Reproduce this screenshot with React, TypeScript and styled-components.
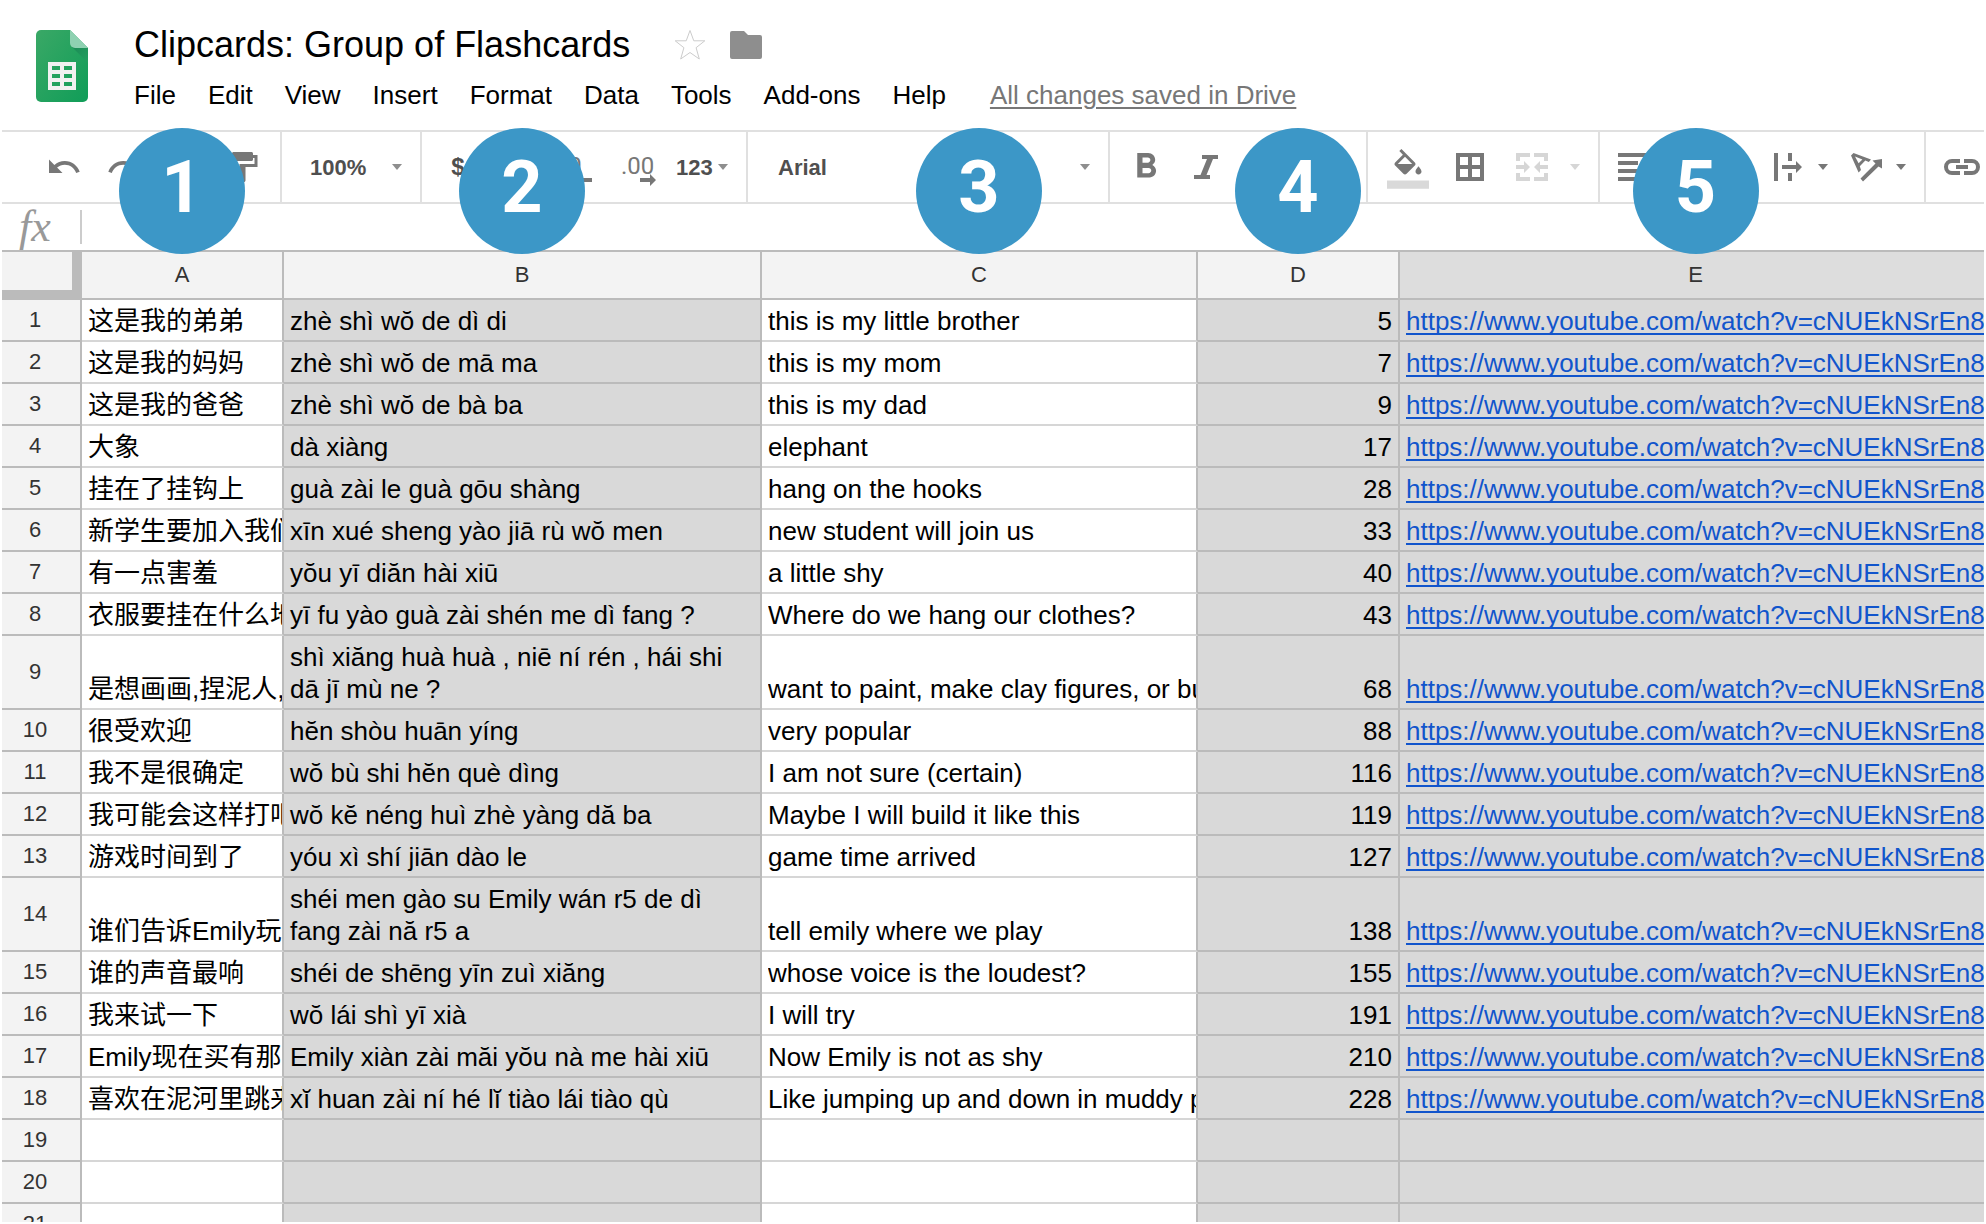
import React from "react";
import styled, { createGlobalStyle } from "styled-components";

const sans = `"Liberation Sans", Arial, "Noto Sans CJK SC", sans-serif`;
const ink = "#777777";
const line = "#e0e0e0";
const gridLine = "#bbbbbb";

const GlobalStyle = createGlobalStyle`
  * { box-sizing: border-box; }
  body { margin: 0; background: #fff; font-family: ${sans}; color: #000; }
  button { font: inherit; color: inherit; background: none; border: 0; padding: 0; cursor: pointer; }
  svg { display: block; flex: none; overflow: visible; }
`;

const Page = styled.div`
  height: 100vh;
  padding: 0 2px 2px;
`;

const Clip = styled.div`
  height: 100%;
  overflow: hidden;
`;

const Header = styled.header`
  display: flex;
  gap: 46px;
  padding: 23px 34px 19px;
`;

const Logo = styled.a`
  padding-top: 7px;
`;

const TitleRow = styled.div`
  display: flex;
  align-items: center;
  gap: 24px;
  margin-bottom: 12px;
`;

const Title = styled.h1`
  margin: 0 20px 0 0;
  font-size: 36px;
  line-height: 44px;
  font-weight: 400;
`;

const FolderButton = styled.button`
  color: #8e8e8e;
`;

const Menu = styled.nav`
  display: flex;
  align-items: center;
  gap: 32px;
  font-size: 26px;
  line-height: 32px;
`;

const SavedLink = styled.a`
  margin-left: 12px;
  color: ${ink};
  text-decoration: underline;
  text-decoration-thickness: 2px;
  text-underline-offset: 3px;
`;

const Toolbar = styled.div`
  display: flex;
  height: 74px;
  border: solid ${line};
  border-width: 2px 0;
  font-size: 22px;
  font-weight: 700;
  color: #4f4f4f;
`;

const Group = styled.div<{ $pad: string; $gap?: number }>`
  display: flex;
  flex: none;
  align-items: center;
  gap: ${(p) => p.$gap ?? 0}px;
  padding: ${(p) => p.$pad};
  border-right: 2px solid ${line};

  &:last-child {
    border-right: 0;
  }
`;

const Tool = styled.button<{ $disabled?: boolean }>`
  display: flex;
  flex: none;
  align-items: center;
  justify-content: center;
  width: 60px;
  height: 68px;
  color: ${(p) => (p.$disabled ? "#d6d6d6" : ink)};
`;

const SlimTool = styled(Tool)`
  width: 22px;
`;

const CurrencyTool = styled(Tool)`
  font-size: 24px;
  color: #4f4f4f;
`;

const DropTool = styled(Tool)`
  width: 78px;
  justify-content: flex-start;
  gap: 8px;
`;

const DropIcon = styled.span`
  display: flex;
  justify-content: center;
  width: 44px;
`;

const Picker = styled.label<{ $width: number }>`
  display: flex;
  align-items: center;
  justify-content: space-between;
  width: ${(p) => p.$width}px;
  color: #8e8e8e;
`;

const PickerSelect = styled.select`
  appearance: none;
  flex: 1;
  min-width: 0;
  padding: 0;
  border: 0;
  background: none;
  color: #4f4f4f;
  font: inherit;
`;

const FormulaBar = styled.div`
  display: flex;
  align-items: center;
  height: 46px;
`;

const FormulaLabel = styled.label`
  width: 80px;
  padding-left: 17px;
  border-right: 2px solid #cccccc;
  font: italic 44px/34px "Liberation Serif", "Times New Roman", serif;
  color: #999999;
`;

const FormulaInput = styled.input`
  flex: 1;
  height: 34px;
  border: 0;
  outline: 0;
  font: 26px/32px ${sans};
`;

const Sheet = styled.table`
  width: calc(100% + 9px);
  table-layout: fixed;
  border-collapse: separate;
  border-spacing: 0;
  border-top: 2px solid ${gridLine};
  font-size: 26px;
  line-height: 32px;
`;

const Col = styled.col<{ $width?: number }>`
  width: ${(p) => (p.$width ? `${p.$width}px` : "auto")};
`;

const Corner = styled.td`
  height: 48px;
  background: #f3f3f3;
  border: solid ${gridLine};
  border-width: 0 10px 10px 0;
`;

const ColumnHead = styled.th<{ $active?: boolean }>`
  position: relative;
  height: 48px;
  padding: 0;
  background: ${(p) => (p.$active ? "#dddddd" : "#f3f3f3")};
  border: solid ${gridLine};
  border-width: 0 2px 2px 0;
  font-size: 22px;
  font-weight: 400;
  color: #333333;
`;

const Badge = styled.span`
  position: absolute;
  left: calc(50% - 63px);
  bottom: 44px;
  width: 126px;
  height: 126px;
  border-radius: 50%;
  background: #3c97c7;
  color: #fff;
  font-family: Roboto, ${sans};
  font-size: 72px;
  font-weight: 700;
  line-height: 120px;
  text-align: center;
`;

const RowHead = styled.th`
  padding: 0 12px 0 0;
  background: #f3f3f3;
  border: solid ${gridLine};
  border-width: 0 2px 2px 0;
  font-size: 22px;
  font-weight: 400;
  color: #333333;
`;

const Cell = styled.td<{ $shaded?: boolean; $wrap?: boolean; $right?: boolean }>`
  height: 42px;
  padding: 5px 6px 3px;
  overflow: hidden;
  vertical-align: bottom;
  white-space: ${(p) => (p.$wrap ? "normal" : "nowrap")};
  text-align: ${(p) => (p.$right ? "right" : "left")};
  background: ${(p) => (p.$shaded ? "#d9d9d9" : "#ffffff")};
  border: solid ${gridLine};
  border-width: 0 2px 2px 0;
  border-bottom-color: ${(p) => (p.$shaded ? gridLine : "#d6d6d6")};
`;

/* Text that runs on past its cell's padding, up to the border. */
const Spill = styled.div`
  margin-right: -6px;
  overflow: hidden;
`;

const CellLink = styled.a`
  color: #1155cc;
  text-decoration: underline;
  text-decoration-thickness: 2px;
  text-decoration-skip-ink: none;
  text-underline-offset: 3px;
`;

const Arrow = () => (
  <svg width="10" height="6" viewBox="0 0 10 6" fill="currentColor">
    <path d="M0 0h10L5 6z" />
  </svg>
);

type GlyphProps = { d: string; w?: number; h?: number; box?: string };

const Glyph = ({ d, w = 36, h = 36, box = "0 0 24 24" }: GlyphProps) => (
  <svg width={w} height={h} viewBox={box} fill="currentColor" fillRule="evenodd">
    <path d={d} />
  </svg>
);

const paths = {
  undo: "M12.5 8c-2.65 0-5.05.99-6.9 2.6L2 7v9h9l-3.62-3.62c1.39-1.16 3.16-1.88 5.12-1.88 3.54 0 6.55 2.31 7.6 5.5l2.37-.78C21.08 11.03 17.15 8 12.5 8z",
  redo: "M18.4 10.6C16.55 8.99 14.15 8 11.5 8c-4.65 0-8.58 3.03-9.96 7.22L3.9 16c1.05-3.19 4.05-5.5 7.6-5.5 1.95 0 3.73.72 5.12 1.88L13 16h9V7l-3.6 3.6z",
  print: "M19 8H5c-1.66 0-3 1.34-3 3v6h4v4h12v-4h4v-6c0-1.66-1.34-3-3-3zm-3 11H8v-5h8v5zM18 3H6v4h12V3z",
  paint: "M18 4V3c0-.55-.45-1-1-1H5c-.55 0-1 .45-1 1v4c0 .55.45 1 1 1h12c.55 0 1-.45 1-1V6h1v4H9v11c0 .55.45 1 1 1h2c.55 0 1-.45 1-1v-9h8V4h-3z",
  bold: "M15.6 10.79c.97-.67 1.65-1.77 1.65-2.79 0-2.26-1.75-4-4-4H7v14h7.04c2.09 0 3.71-1.7 3.71-3.79 0-1.52-.86-2.82-2.15-3.42zM10 6.5h3c.83 0 1.5.67 1.5 1.5s-.67 1.5-1.5 1.5h-3v-3zm3.5 9H10v-3h3.5c.83 0 1.5.67 1.5 1.5s-.67 1.5-1.5 1.5z",
  italic: "M8 0h16v4h-5l-6.5 16H16v4H0v-4h6.500L13 4H8z",
  strike: "M10 19h4v-3h-4v3zM5 4v3h5v3h4V7h5V4H5zM3 14h18v-2H3v2z",
  textColor: "M0 20h24v4H0zM11 3L5.500 17h2.250l1.120-3h6.250l1.120 3h2.250L13 3h-2zm-1.380 9L12 5.670 14.380 12H9.620z",
  fill: "M16.56 8.94L7.62 0 6.21 1.41l2.38 2.38-5.15 5.15c-.59.59-.59 1.54 0 2.12l5.5 5.5c.29.29.68.44 1.06.44s.77-.15 1.06-.44l5.5-5.5c.59-.58.59-1.53 0-2.12zM5.21 10L10 5.21 14.79 10H5.21zM19 11.5s-2 2.17-2 3.5c0 1.1.9 2 2 2s2-.9 2-2c0-1.33-2-3.5-2-3.5z",
  borders: "M0 0h28v28H0zM4 4v8h8V4zM16 4v8h8V4zM4 16v8h8v-8zM16 16v8h8v-8z",
  merge: "M0 0h14v4H4v4H0zM18 0h14v8h-4V4H18zM0 20h4v4h10v4H0zM28 20h4v8H18v-4h10zM0 12h8V8l6 6-6 6v-4H0zM32 12h-8V8l-6 6 6 6v-4h8z",
  align: "M0 0h28v4H0zM0 8h20v4H0zM0 16h28v4H0zM0 24h20v4H0z",
  vertical: "M8 19h3v4h2v-4h3l-4-4-4 4zm8-14h-3V1h-2v4H8l4 4 4-4zM4 11v2h16v-2H4z",
  wrap: "M0 0h4v28H0zM14 0h4v8h-4zM14 20h4v8h-4zM8 12h14V8l6 6-6 6v-4H8z",
  rotate: "M0 2.500L2.500 0 20 6.500 17.800 9 14.300 7.600 8.800 13.200 10 17 7.600 19.400zM4 3.500L7.600 10.300 11.400 6.400zM9.500 25.500L24.500 10.500 21.500 7.500 31 6V15.500L27.500 13.400 12 28.500z",
  link: "M8 0h8v4H8a4 4 0 0 0 0 8h8v4H8A8 8 0 0 1 8 0zM20 0h8a8 8 0 0 1 0 16h-8v-4h8a4 4 0 0 0 0-8h-8zM12 6h12v4H12z",
  folder: "M2 0h12l4 4h12a2 2 0 0 1 2 2v20a2 2 0 0 1-2 2H2a2 2 0 0 1-2-2V2a2 2 0 0 1 2-2z",
};

const SheetsLogo = () => (
  <svg width="52" height="72" viewBox="0 0 52 72">
    <defs>
      <linearGradient id="leaf" x1="0" y1="0" x2="1" y2="1">
        <stop offset="0" stopColor="#3aa866" />
        <stop offset="1" stopColor="#109d58" />
      </linearGradient>
      <linearGradient id="shade" x1="0" y1="0" x2="1" y2="1">
        <stop offset="0" stopColor="#1b8a55" />
        <stop offset="1" stopColor="#24a061" />
      </linearGradient>
    </defs>
    <path d="M5 0h29l18 18v49a5 5 0 0 1-5 5H5a5 5 0 0 1-5-5V5a5 5 0 0 1 5-5z" fill="url(#leaf)" />
    <path d="M35.500 16.500L52 33V18z" fill="url(#shade)" />
    <path d="M34 0l18 18H39a5 5 0 0 1-5-5z" fill="#8ed1b1" />
    <path
      d="M12 32h28v28H12zM16 36v4h8v-4zM28 36v4h8v-4zM16 44v4h8v-4zM28 44v4h8v-4zM16 52v4h8v-4zM28 52v4h8v-4z"
      fill="#f1f1f1"
      fillRule="evenodd"
    />
  </svg>
);

const Star = () => (
  <svg width="32" height="32" viewBox="0 0 32 32" fill="none" stroke="#cccccc">
    <path d="M16 1.500l3.800 10.300h11l-8.700 6.900 3.200 11.300L16 23.500 6.700 30l3.200-11.300L1.200 11.800h11z" />
  </svg>
);

const Decimals = ({ more }: { more?: boolean }) => (
  <svg width="36" height="36" viewBox="2 0 36 36" fill="currentColor">
    <text x={more ? -3 : 0} y="25" fontFamily="Roboto, sans-serif" fontSize="24" fontWeight="400">
      {more ? ".00" : ".0"}
    </text>
    <path d={more ? "M16 29h10v-4l6 6-6 6v-4H16z" : "M30 29H20v-4l-6 6 6 6v-4h10z"} />
  </svg>
);

const FillIcon = () => (
  <svg width="36" height="36" viewBox="0 0 24 24" fill="currentColor" fillRule="evenodd">
    <path d={paths.fill} />
    <rect x="-2" y="21" width="28" height="5.5" fill="#d9d9d9" />
  </svg>
);

const menus = ["File", "Edit", "View", "Insert", "Format", "Data", "Tools", "Add-ons", "Help"];

const videoUrl = "https://www.youtube.com/watch?v=cNUEkNSrEn8";

const rows: [string, string, string, number][] = [
  ["这是我的弟弟", "zhè shì wŏ de dì di", "this is my little brother", 5],
  ["这是我的妈妈", "zhè shì wŏ de mā ma", "this is my mom", 7],
  ["这是我的爸爸", "zhè shì wŏ de bà ba", "this is my dad", 9],
  ["大象", "dà xiàng", "elephant", 17],
  ["挂在了挂钩上", "guà zài le guà gōu shàng", "hang on the hooks", 28],
  ["新学生要加入我们", "xīn xué sheng yào jiā rù wŏ men", "new student will join us", 33],
  ["有一点害羞", "yŏu yī diăn hài xiū", "a little shy", 40],
  ["衣服要挂在什么地", "yī fu yào guà zài shén me dì fang ?", "Where do we hang our clothes?", 43],
  ["是想画画,捏泥人,", "shì xiăng huà huà , niē ní rén , hái shi dā jī mù ne ?", "want to paint, make clay figures, or build", 68],
  ["很受欢迎", "hĕn shòu huān yíng", "very popular", 88],
  ["我不是很确定", "wŏ bù shi hĕn què dìng", "I am not sure (certain)", 116],
  ["我可能会这样打吧", "wŏ kĕ néng huì zhè yàng dă ba", "Maybe I will build it like this", 119],
  ["游戏时间到了", "yóu xì shí jiān dào le", "game time arrived", 127],
  ["谁们告诉Emily玩", "shéi men gào su Emily wán r5 de dì fang zài nă r5 a", "tell emily where we play", 138],
  ["谁的声音最响", "shéi de shēng yīn zuì xiăng", "whose voice is the loudest?", 155],
  ["我来试一下", "wŏ lái shì yī xià", "I will try", 191],
  ["Emily现在买有那", "Emily xiàn zài măi yŏu nà me hài xiū", "Now Emily is not as shy", 210],
  ["喜欢在泥河里跳来", "xĭ huan zài ní hé lĭ tiào lái tiào qù", "Like jumping up and down in muddy puddles", 228],
];

const emptyRows = [19, 20, 21];

export default function App() {
  return (
    <Page>
      <GlobalStyle />
      <Clip>
        <Header>
          <Logo href="#" aria-label="Sheets home">
            <SheetsLogo />
          </Logo>
          <div>
            <TitleRow>
              <Title>Clipcards: Group of Flashcards</Title>
              <button aria-label="Star">
                <Star />
              </button>
              <FolderButton aria-label="Move to folder">
                <Glyph d={paths.folder} w={32} h={28} box="0 0 32 28" />
              </FolderButton>
            </TitleRow>
            <Menu>
              {menus.map((m) => (
                <button key={m}>{m}</button>
              ))}
              <SavedLink href="#">All changes saved in Drive</SavedLink>
            </Menu>
          </div>
        </Header>

        <Toolbar role="toolbar">
          <Group $pad="0 6px 0 32px">
            <Tool aria-label="Undo"><Glyph d={paths.undo} /></Tool>
            <Tool aria-label="Redo"><Glyph d={paths.redo} /></Tool>
            <Tool aria-label="Print"><Glyph d={paths.print} /></Tool>
            <Tool aria-label="Paint format"><Glyph d={paths.paint} /></Tool>
          </Group>
          <Group $pad="0 18px 0 28px">
            <Picker $width={92}>
              <PickerSelect aria-label="Zoom"><option>100%</option></PickerSelect>
              <Arrow />
            </Picker>
          </Group>
          <Group $pad="0 18px 0 6px" $gap={2}>
            <CurrencyTool aria-label="Format as currency">$</CurrencyTool>
            <CurrencyTool aria-label="Format as percent">%</CurrencyTool>
            <Tool aria-label="Decrease decimal places"><Decimals /></Tool>
            <Tool aria-label="Increase decimal places"><Decimals more /></Tool>
            <Picker $width={52}>
              <PickerSelect aria-label="More formats"><option>123</option></PickerSelect>
              <Arrow />
            </Picker>
          </Group>
          <Group $pad="0 18px 0 30px">
            <Picker $width={312}>
              <PickerSelect aria-label="Font"><option>Arial</option></PickerSelect>
              <Arrow />
            </Picker>
          </Group>
          <Group $pad="0 10px 0 6px">
            <Tool aria-label="Bold"><Glyph d={paths.bold} w={42} h={42} /></Tool>
            <Tool aria-label="Italic"><Glyph d={paths.italic} w={24} h={24} /></Tool>
            <Tool aria-label="Strikethrough"><Glyph d={paths.strike} /></Tool>
            <Tool aria-label="Text color"><Glyph d={paths.textColor} /></Tool>
          </Group>
          <Group $pad="0 12px 0 10px" $gap={2}>
            <Tool aria-label="Fill color"><FillIcon /></Tool>
            <Tool aria-label="Borders"><Glyph d={paths.borders} w={28} h={28} box="0 0 28 28" /></Tool>
            <Tool aria-label="Merge cells" $disabled><Glyph d={paths.merge} w={32} h={28} box="0 0 32 28" /></Tool>
            <SlimTool aria-label="Merge options" $disabled><Arrow /></SlimTool>
          </Group>
          <Group $pad="0 2px 0 10px">
            <DropTool aria-label="Horizontal align">
              <DropIcon><Glyph d={paths.align} w={28} h={28} box="0 0 28 28" /></DropIcon>
              <Arrow />
            </DropTool>
            <DropTool aria-label="Vertical align">
              <DropIcon><Glyph d={paths.vertical} /></DropIcon>
              <Arrow />
            </DropTool>
            <DropTool aria-label="Text wrapping">
              <DropIcon><Glyph d={paths.wrap} w={28} h={28} box="0 0 28 28" /></DropIcon>
              <Arrow />
            </DropTool>
            <DropTool aria-label="Text rotation">
              <DropIcon><Glyph d={paths.rotate} w={31} h={28} box="0 0 31 28" /></DropIcon>
              <Arrow />
            </DropTool>
          </Group>
          <Group $pad="0 0 0 6px">
            <Tool aria-label="Insert link"><Glyph d={paths.link} w={36} h={16} box="0 0 36 16" /></Tool>
          </Group>
        </Toolbar>

        <FormulaBar>
          <FormulaLabel htmlFor="formula">fx</FormulaLabel>
          <FormulaInput id="formula" />
        </FormulaBar>

        <Sheet>
          <colgroup>
            <Col $width={80} />
            <Col $width={202} />
            <Col $width={478} />
            <Col $width={436} />
            <Col $width={202} />
            <Col />
          </colgroup>
          <thead>
            <tr>
              <Corner />
              {["A", "B", "C", "D", "E"].map((name, i) => (
                <ColumnHead key={name} scope="col" $active={name === "E"}>
                  {name}
                  <Badge>{i + 1}</Badge>
                </ColumnHead>
              ))}
            </tr>
          </thead>
          <tbody>
            {rows.map(([hanzi, pinyin, english, time], i) => (
              <tr key={i}>
                <RowHead scope="row">{i + 1}</RowHead>
                <Cell lang="zh-CN"><Spill>{hanzi}</Spill></Cell>
                <Cell $shaded $wrap>{pinyin}</Cell>
                <Cell><Spill>{english}</Spill></Cell>
                <Cell $shaded $right>{time}</Cell>
                <Cell $shaded><CellLink href={videoUrl}>{videoUrl}</CellLink></Cell>
              </tr>
            ))}
            {emptyRows.map((n) => (
              <tr key={n}>
                <RowHead scope="row">{n}</RowHead>
                <Cell />
                <Cell $shaded />
                <Cell />
                <Cell $shaded />
                <Cell $shaded />
              </tr>
            ))}
          </tbody>
        </Sheet>
      </Clip>
    </Page>
  );
}
